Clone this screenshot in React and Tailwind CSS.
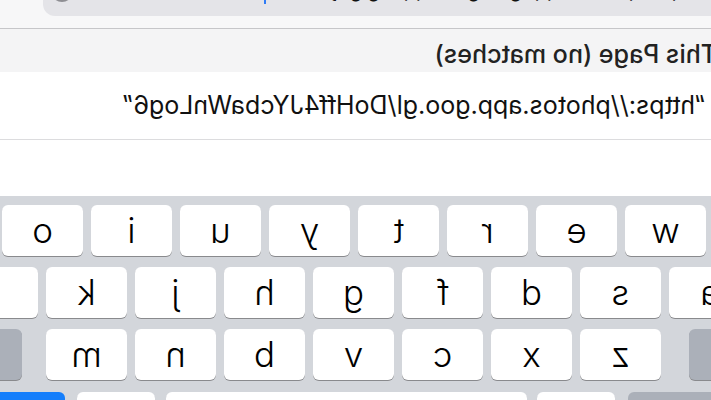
const row1 = ["w", "e", "r", "t", "y", "u", "i", "o"];
const row2 = ["a", "s", "d", "f", "g", "h", "j", "k", "l"];
const row3 = ["z", "x", "c", "v", "b", "n", "m"];

function Key({ label, className = "" }) {
  return (
    <div
      className={`h-[51px] shrink-0 rounded-[6px] bg-white shadow-[0_1px_0_#898a8d] flex items-center justify-center text-[35px] font-light leading-none text-black ${className}`}
    >
      {label}
    </div>
  );
}

export default function App() {
  return (
    <div className="w-[711px] h-[400px] overflow-hidden bg-white -scale-x-100 font-['Inter','Liberation_Sans',sans-serif]">
      {/* search bar, mostly scrolled off */}
      <div className="h-[28px] bg-[#f7f7f8] overflow-hidden">
        <div className="relative -mt-[36px] h-[52px] w-[668px] rounded-r-[12px] bg-[#e4e4e8] flex items-center pl-[10px] text-[20px] text-[#111]">
          <span>https://photos.app.goo.gl/shopping guy</span>
          <div className="absolute left-[445px] top-[14px] h-[26px] w-[2px] bg-[#2f7bf5]" />
          <div className="absolute right-[8px] top-[16px] h-[22px] w-[22px] rounded-full bg-[#8e8e93]" />
        </div>
      </div>
      <div className="h-px bg-[#c6c6c9]" />

      {/* section header */}
      <div className="h-[43px] bg-[#f4f4f5] flex items-center pt-[7px] -ml-[6px] text-[25px] font-medium leading-none text-[#222]">
        This Page (no matches)
      </div>

      {/* result row */}
      <div className="h-[68px] bg-white border-b border-[#dcdcde] flex items-center pl-[5px] text-[25px] text-[#111]">
        “https://photos.app.goo.gl/DoHff4JYcbaWnLog6”
      </div>

      <div className="h-[56px] bg-white" />

      {/* keyboard */}
      <div className="h-[204px] bg-[#d3d6db] pt-[9px] flex flex-col gap-[11px]">
        <div className="flex gap-[8px] ml-[5px]">
          {row1.map((k) => (
            <Key key={k} label={k} className="w-[81px]" />
          ))}
        </div>
        <div className="flex gap-[8px] -ml-[39px]">
          {row2.map((k) => (
            <Key key={k} label={k} className="w-[81px]" />
          ))}
        </div>
        <div className="flex -ml-[40px]">
          <div className="h-[51px] w-[62px] shrink-0 rounded-[6px] bg-[#abb0b9] shadow-[0_1px_0_#898a8d]" />
          <div className="flex gap-[8px] ml-[28px]">
            {row3.map((k) => (
              <Key key={k} label={k} className="w-[81px]" />
            ))}
          </div>
          <div className="ml-[24px] h-[51px] w-[62px] shrink-0 rounded-[6px] bg-[#abb0b9] shadow-[0_1px_0_#898a8d]" />
        </div>
        <div className="flex -ml-[10px] mt-[1px]">
          <div className="h-[51px] w-[93px] shrink-0 rounded-[6px] bg-[#abb0b9]" />
          <Key label="" className="ml-[13px] w-[78px]" />
          <Key label="" className="ml-[10px] w-[361px]" />
          <Key label="" className="ml-[11px] w-[78px]" />
          <div className="ml-[12px] h-[51px] w-[90px] shrink-0 rounded-[6px] bg-[#147efb]" />
        </div>
      </div>
    </div>
  );
}
